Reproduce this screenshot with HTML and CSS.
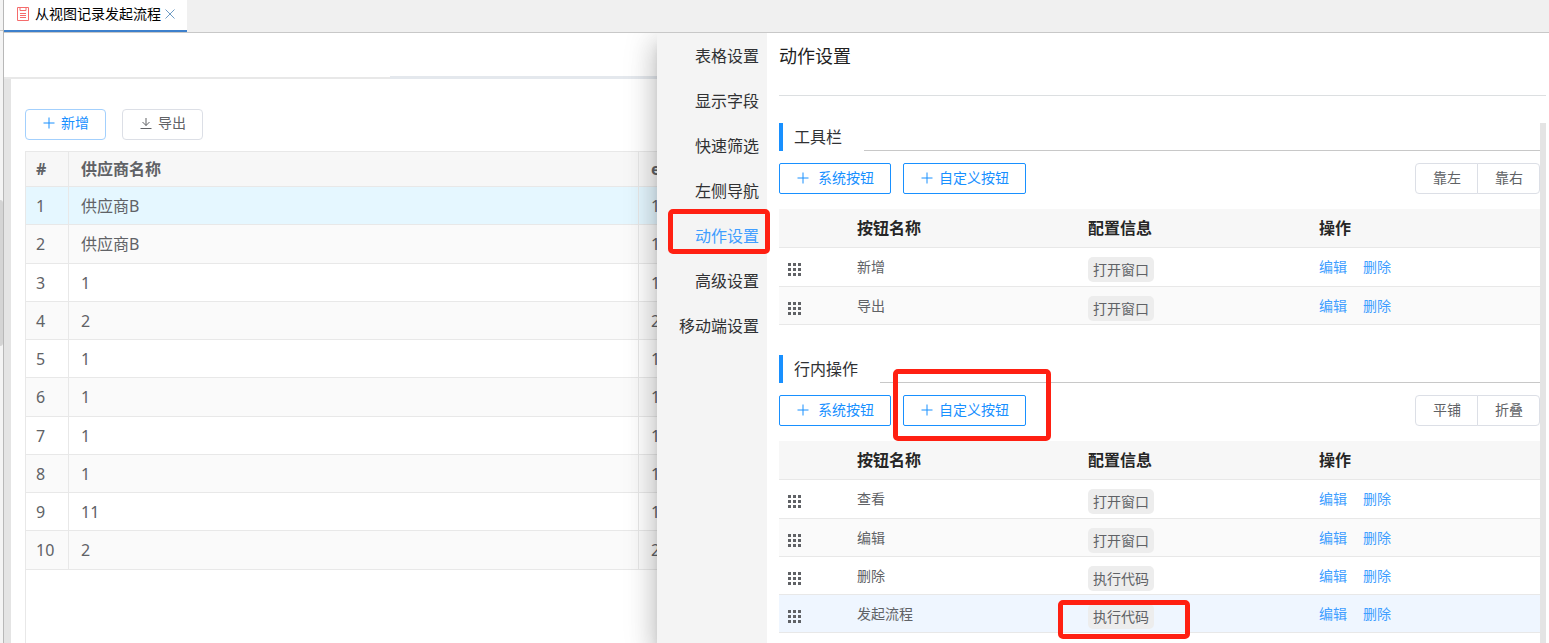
FILE: index.html
```html
<!DOCTYPE html>
<html lang="zh-CN">
<head>
  <meta charset="UTF-8" />
  <meta name="viewport" content="width=device-width, initial-scale=1.0" />
  <title>从视图记录发起流程</title>
  <link rel="stylesheet" href="styles.css">
</head>
<body>
  <!-- 图标 -->
  <svg class="sprite" aria-hidden="true">
    <symbol id="plus" viewBox="0 0 12 12"><path d="M6 0.5V11.5M0.5 6H11.5" fill="none" stroke="currentColor" /></symbol>
    <symbol id="download" viewBox="0 0 12 12"><path d="M6 1V8.5M2.5 5L6 8.5L9.5 5M0.5 11.5H11.5" fill="none" stroke="currentColor" /></symbol>
    <symbol id="drag" viewBox="0 0 13 13"><path d="M0 0h3v3h-3zM5 0h3v3h-3zM10 0h3v3h-3zM0 5h3v3h-3zM5 5h3v3h-3zM10 5h3v3h-3zM0 10h3v3h-3zM5 10h3v3h-3zM10 10h3v3h-3z" fill="currentColor" /></symbol>
  </svg>

  <div class="rail"><div class="rail-top"></div><div class="rail-thumb"></div></div>

  <div class="app">
    <div class="tabs">
      <div class="tab">
        <svg class="tab-icon" viewBox="0 0 12 14" aria-hidden="true">
          <path d="M0.5 0.5H11.5V13.5H0.5ZM3 0.5V3.5H9V0.5M3 6.5H9M3 8.5H9M3 10.5H9" fill="none" stroke="#f56c6c" />
        </svg>
        <span>从视图记录发起流程</span>
        <button type="button" class="tab-close" aria-label="关闭">
          <svg viewBox="0 0 10 10"><path d="M0.5 0.5L9.5 9.5M9.5 0.5L0.5 9.5" fill="none" stroke="#6f9cc4" /></svg>
        </button>
      </div>
    </div>

    <div class="workspace">
      <div class="view-header"><div class="view-header-line"></div></div>

      <main class="view">
        <div class="view-tools">
          <button type="button" class="btn btn-add"><svg class="icon"><use href="#plus" /></svg>新增</button>
          <button type="button" class="btn"><svg class="icon"><use href="#download" /></svg>导出</button>
        </div>
        <div class="grid-box">
          <table class="grid">
            <thead>
              <tr><th class="col-index">#</th><th class="col-name">供应商名称</th><th>e</th></tr>
            </thead>
            <tbody>
              <tr class="current"><td>1</td><td>供应商B</td><td>1</td></tr>
              <tr><td>2</td><td>供应商B</td><td>1</td></tr>
              <tr><td>3</td><td>1</td><td>1</td></tr>
              <tr><td>4</td><td>2</td><td>2</td></tr>
              <tr><td>5</td><td>1</td><td>1</td></tr>
              <tr><td>6</td><td>1</td><td>1</td></tr>
              <tr><td>7</td><td>1</td><td>1</td></tr>
              <tr><td>8</td><td>1</td><td>1</td></tr>
              <tr><td>9</td><td>11</td><td>1</td></tr>
              <tr><td>10</td><td>2</td><td>2</td></tr>
            </tbody>
          </table>
        </div>
      </main>

      <!-- 设置抽屉 -->
      <aside class="drawer">
        <nav class="menu">
          <a href="#">表格设置</a>
          <a href="#">显示字段</a>
          <a href="#">快速筛选</a>
          <a href="#">左侧导航</a>
          <a href="#" class="active mark mark-menu">动作设置</a>
          <a href="#">高级设置</a>
          <a href="#">移动端设置</a>
        </nav>

        <div class="panel">
          <h2 class="panel-title">动作设置</h2>
          <div class="panel-body">
            <section class="section">
              <div class="section-head"><h3>工具栏</h3></div>
              <div class="section-tools">
                <button type="button" class="btn btn-primary btn-system"><svg class="icon"><use href="#plus" /></svg>系统按钮</button>
                <button type="button" class="btn btn-primary"><svg class="icon"><use href="#plus" /></svg>自定义按钮</button>
                <div class="btn-group">
                  <button type="button" class="btn">靠左</button>
                  <button type="button" class="btn">靠右</button>
                </div>
              </div>
              <table class="actions">
                <thead>
                  <tr><th class="col-drag"></th><th>按钮名称</th><th>配置信息</th><th>操作</th></tr>
                </thead>
                <tbody>
                  <tr>
                    <td class="drag"><svg><use href="#drag" /></svg></td>
                    <td>新增</td>
                    <td class="config"><span class="tag">打开窗口</span></td>
                    <td class="links"><a href="#">编辑</a><a href="#">删除</a></td>
                  </tr>
                  <tr>
                    <td class="drag"><svg><use href="#drag" /></svg></td>
                    <td>导出</td>
                    <td class="config"><span class="tag">打开窗口</span></td>
                    <td class="links"><a href="#">编辑</a><a href="#">删除</a></td>
                  </tr>
                </tbody>
              </table>
            </section>

            <section class="section">
              <div class="section-head"><h3>行内操作</h3></div>
              <div class="section-tools">
                <button type="button" class="btn btn-primary btn-system"><svg class="icon"><use href="#plus" /></svg>系统按钮</button>
                <div class="mark mark-custom">
                  <button type="button" class="btn btn-primary"><svg class="icon"><use href="#plus" /></svg>自定义按钮</button>
                </div>
                <div class="btn-group">
                  <button type="button" class="btn">平铺</button>
                  <button type="button" class="btn">折叠</button>
                </div>
              </div>
              <table class="actions">
                <thead>
                  <tr><th class="col-drag"></th><th>按钮名称</th><th>配置信息</th><th>操作</th></tr>
                </thead>
                <tbody>
                  <tr>
                    <td class="drag"><svg><use href="#drag" /></svg></td>
                    <td>查看</td>
                    <td class="config"><span class="tag">打开窗口</span></td>
                    <td class="links"><a href="#">编辑</a><a href="#">删除</a></td>
                  </tr>
                  <tr>
                    <td class="drag"><svg><use href="#drag" /></svg></td>
                    <td>编辑</td>
                    <td class="config"><span class="tag">打开窗口</span></td>
                    <td class="links"><a href="#">编辑</a><a href="#">删除</a></td>
                  </tr>
                  <tr>
                    <td class="drag"><svg><use href="#drag" /></svg></td>
                    <td>删除</td>
                    <td class="config"><span class="tag">执行代码</span></td>
                    <td class="links"><a href="#">编辑</a><a href="#">删除</a></td>
                  </tr>
                  <tr class="current">
                    <td class="drag"><svg><use href="#drag" /></svg></td>
                    <td>发起流程</td>
                    <td class="config"><span class="tag mark mark-code">执行代码</span></td>
                    <td class="links"><a href="#">编辑</a><a href="#">删除</a></td>
                  </tr>
                </tbody>
              </table>
            </section>
          </div>
        </div>
      </aside>
    </div>
  </div>
</body>
</html>
```
FILE: styles.css
```css
:root {
  --blue: #1890ff;
  --link: #409eff;
  --text: #606266;
  --line: #e8e8e8;
  --red: #ff2012;
}
* { box-sizing: border-box; }
body {
  margin: 0;
  height: 100vh;
  display: flex;
  overflow: hidden;
  font-family: "Noto Sans", "Noto Sans CJK SC", sans-serif;
  font-size: 14px;
  line-height: 20px;
  color: var(--text);
  background: #fff;
}
a { color: inherit; text-decoration: none; }
h2, h3 { margin: 0; font-weight: normal; }
table { border-collapse: separate; border-spacing: 0; table-layout: fixed; width: 100%; }
th { text-align: left; }
.sprite { position: absolute; width: 0; height: 0; }

/* 左侧边缘 */
.rail {
  flex: 0 0 4px;
  background: #f4f4f4;
  border-right: 1px solid #b8b8b8;
}
.rail-top { height: 31px; border-bottom: 1px solid #c8c8c8; }
.rail-thumb { height: 146px; margin-top: 169px; background: #d4d4d4; border-radius: 0 3px 3px 0; }

.app { flex: 1; min-width: 0; display: flex; flex-direction: column; }

/* 标签页 */
.tabs {
  display: flex;
  height: 33px;
  background: #f0f0f0;
  border-bottom: 1px solid #c8c8c8;
}
.tab {
  display: flex;
  align-items: center;
  padding: 0 12px 2px 13px;
  background: #fff;
  border-bottom: 2px solid #3d80cc;
  color: #000;
}
.tab-icon { width: 12px; height: 14px; margin-right: 6px; }
.tab-close { width: 10px; height: 20px; margin-left: 4px; padding: 0; border: 0; background: none; cursor: pointer; }
.tab-close svg { display: block; width: 10px; height: 10px; }

.workspace { position: relative; flex: 1; min-height: 0; display: flex; flex-direction: column; overflow: hidden; }
.view-header {
  flex: 0 0 46px;
  display: flex;
  align-items: flex-end;
  justify-content: flex-end;
  border-bottom: 2px solid var(--line);
}
.view-header-line { width: 75%; height: 3px; margin-bottom: -2px; background: #e4e8ed; }
.view {
  flex: 1;
  min-height: 0;
  display: flex;
  flex-direction: column;
  padding: 30px 0 0 14px;
  border-left: 7px solid #e4e4e4;
}
.view-tools { display: flex; gap: 16px; margin-bottom: 11px; }

.btn {
  display: flex;
  align-items: center;
  height: 31px;
  padding: 0 16px 2px 17px;
  border: 1px solid #dcdfe6;
  border-radius: 4px;
  background: #fff;
  font: inherit;
  color: var(--text);
  white-space: nowrap;
  cursor: pointer;
}
.view-tools .btn { padding-bottom: 4px; }
.icon { width: 12px; height: 12px; margin-right: 6px; }
.btn-add { border-color: #a3d0fd; color: var(--blue); }
.btn-primary { border-color: var(--blue); border-radius: 2px; color: var(--blue); }
.btn-system .icon { margin-right: 9px; }

/* 数据表格 */
.grid-box { flex: 1; border: 1px solid var(--line); border-bottom: 0; }
.grid { font-size: 16px; }
.grid .col-index { width: 43px; }
.grid .col-name { width: 570px; }
.grid th, .grid td {
  height: 38px;
  padding: 0 12px;
  border-right: 1px solid var(--line);
  border-bottom: 1px solid var(--line);
}
.grid th { height: 35px; background: #f7f7f7; }
.grid th:first-child, .grid td:first-child { padding: 0 10px; }
.grid tbody tr:nth-child(even) { background: #fafafa; }
.grid tbody tr:nth-child(4n+2) td { height: 39px; }
.grid tbody tr.current { background: #e5f7ff; }

/* 抽屉 */
.drawer {
  position: absolute;
  top: 0;
  right: 0;
  bottom: 0;
  width: 892px;
  display: flex;
  background: #fff;
  box-shadow: 0 8px 10px -5px rgba(0,0,0,0.2), 0 16px 24px 2px rgba(0,0,0,0.14), 0 6px 30px 5px rgba(0,0,0,0.12);
}
.menu { flex: 0 0 110px; padding-top: 1px; background: #f4f4f4; }
.menu a {
  display: block;
  height: 45px;
  padding-right: 8px;
  line-height: 45px;
  font-size: 16px;
  text-align: right;
  color: #303133;
}
.menu a.active { color: var(--link); }

.panel { flex: 1; min-width: 0; display: flex; flex-direction: column; padding: 0 3px 0 12px; }
.panel-title {
  height: 63px;
  margin-bottom: 27px;
  border-bottom: 1px solid #dcdfe1;
  font-size: 18px;
  line-height: 46px;
  color: #1f1f1f;
}
.panel-body { flex: 1; min-height: 0; border-right: 6px solid #e4e4e4; }
.section { margin-bottom: 30px; }
.section-head { display: flex; height: 28px; margin-bottom: 12px; }
.section-head h3 {
  padding: 0 22px 0 11px;
  border-left: 4px solid var(--blue);
  font-size: 16px;
  line-height: 28px;
  color: #303133;
}
.section-head::after { content: ""; flex: 1; border-bottom: 1px solid #c8c8c8; }
.section-tools { display: flex; gap: 12px; margin-bottom: 15px; }
.btn-group { display: flex; margin-left: auto; }
.btn-group .btn:first-child { border-radius: 4px 0 0 4px; }
.btn-group .btn:last-child { margin-left: -1px; border-radius: 0 4px 4px 0; }

.actions .col-drag { width: 68px; }
.actions th, .actions td { height: 38px; padding: 0 10px; border-bottom: 1px solid var(--line); }
.actions th { height: 39px; background: #f7f7f7; font-size: 16px; color: #262626; }
.actions tbody tr:first-child td { height: 39px; }
.actions tbody tr:nth-child(even) { background: #fafafa; }
.actions tbody tr.current { background: #eff6ff; }
.actions .drag { padding: 5px 9px 0; }
.actions .config { padding-top: 5px; }
.drag svg { display: block; width: 13px; height: 13px; }
.tag {
  display: block;
  width: fit-content;
  padding: 0 5px;
  border-radius: 5px;
  background: #ededed;
  line-height: 25px;
}
.links a { margin-right: 16px; color: var(--link); }

/* 红框标注 */
.mark { position: relative; }
.mark::after {
  content: "";
  position: absolute;
  z-index: 2;
  border: 5px solid var(--red);
  border-radius: 5px;
  pointer-events: none;
}
.mark-menu::after { top: -5px; bottom: 5px; left: 11px; right: -3px; }
.mark-custom::after { top: -26px; bottom: -15px; left: -10px; right: -25px; }
.mark-code::after { top: -4px; bottom: -10px; left: -30px; right: -36px; }
```
